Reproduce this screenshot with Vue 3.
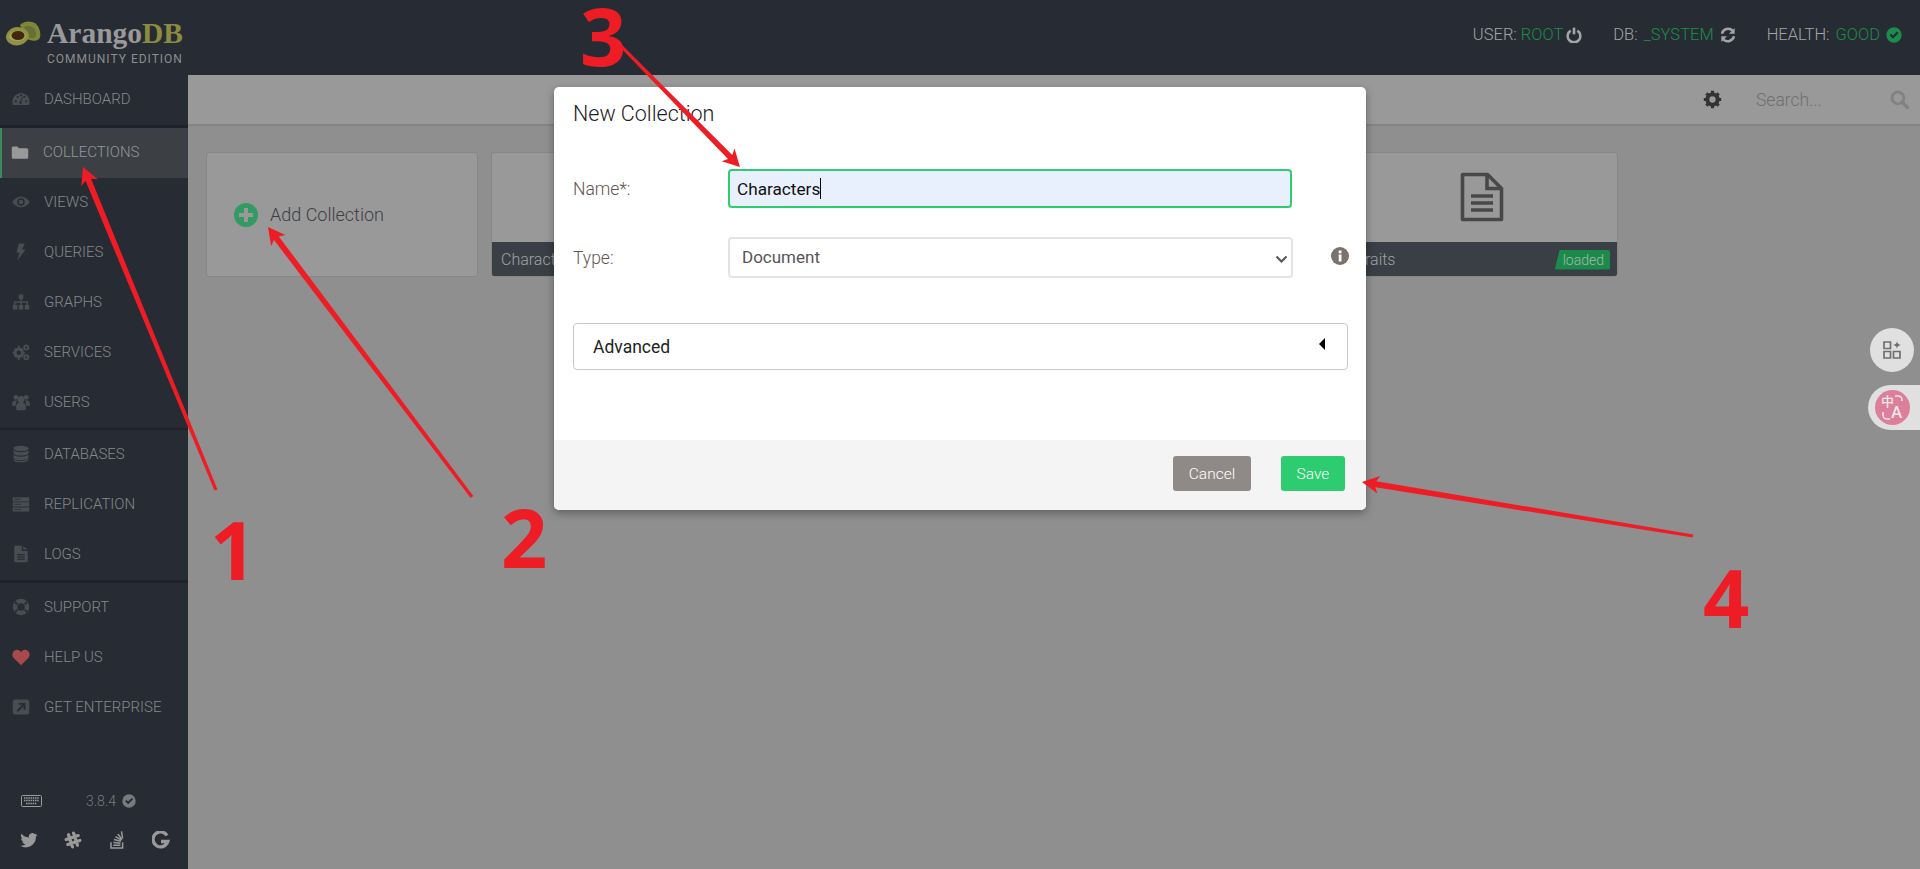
<script setup>
const icons = {
  gauge: { fill: 'M12 4a11.500 11.500 0 0 0-11.500 11.500c0 2 .5 3.500 1.300 4.500h20.400c.8-1 1.300-2.500 1.300-4.500A11.500 11.500 0 0 0 12 4zM5 16.500a1.500 1.500 0 1 1 0-3 1.500 1.500 0 0 1 0 3zM7.500 10.500a1.500 1.500 0 1 1 0-3 1.500 1.500 0 0 1 0 3zM12 8.500a1.500 1.500 0 1 1 0-3 1.500 1.500 0 0 1 0 3zM19 16.500a1.500 1.500 0 1 1 0-3 1.500 1.500 0 0 1 0 3zM16.500 10.500a1.500 1.500 0 1 1 0-3 1.500 1.500 0 0 1 0 3zM12 18.500a2 2 0 0 1-.7-3.900l2.200-5.500 1 .4-2.200 5.500a2 2 0 0 1-.3 3.500z' },
  folder: { fill: 'M1 6.500A2 2 0 0 1 3 4.500h5.500l2 2.500H21a2 2 0 0 1 2 2v10a2 2 0 0 1-2 2H3a2 2 0 0 1-2-2z' },
  eye: { fill: 'M12 5C6.500 5 2.500 8.500.5 12c2 3.500 6 7 11.500 7s9.500-3.500 11.500-7C21.500 8.500 17.500 5 12 5zM12 17a5 5 0 1 1 0-10 5 5 0 0 1 0 10zM12 9a3 3 0 1 0 0 6 3 3 0 0 0 0-6z' },
  bolt: { fill: 'M9 0.500h8l-3.500 8H18L7 24l3-11H6z' },
  sitemap: { fill: 'M9 2h6v6h-2v3h8.500v5H23v6h-6v-6h2.500v-3h-6.500v3H15v6H9v-6h2v-3H4.500v3H7v6H1v-6h1.500v-5H11V8H9z' },
  cogs: { fill: 'M9 6a7 7 0 1 1 0 14A7 7 0 0 1 9 6zm0 4a3 3 0 1 0 0 6 3 3 0 0 0 0-6zM19 2a4 4 0 1 1 0 8 4 4 0 0 1 0-8zm0 2.500a1.500 1.500 0 1 0 0 3 1.500 1.500 0 0 0 0-3zM19 15a4 4 0 1 1 0 8 4 4 0 0 1 0-8zm0 2.500a1.500 1.500 0 1 0 0 3 1.500 1.500 0 0 0 0-3z', line: 'M9 3.500v3M9 19.500v3M1 13h3M14 13h3M3.500 7.500l2 2M12.500 16.500l2 2M14.500 7.500l-2 2M5.500 16.500l-2 2', width: 2.6 },
  users: { fill: 'M5 2.500a3.200 3.200 0 1 1 0 6.400 3.200 3.200 0 0 1 0-6.400zM19 2.500a3.200 3.200 0 1 1 0 6.400 3.200 3.200 0 0 1 0-6.400zM12 4a4.500 4.500 0 1 1 0 9 4.500 4.500 0 0 1 0-9zM0 16c0-3 1-6 3.500-6h3.200C5.500 11.500 5 13.500 5 15.500v1.500H0zM24 16c0-3-1-6-3.500-6h-3.200c1.200 1.500 1.700 3.500 1.700 5.500v1.500h5zM9 13h6c2.500 0 3.500 2.500 3.500 5.500v2c0 1.500-1 2.500-2.500 2.500H8c-1.500 0-2.500-1-2.500-2.500v-2c0-3 1-5.500 3.500-5.500z' },
  database: { fill: 'M12 1c5.500 0 10 1.500 10 3.500S17.500 8 12 8 2 6.500 2 4.500 6.500 1 12 1zM2 7c2 1.800 6 2.500 10 2.500S20 8.800 22 7v3.500c0 2-4.500 3.500-10 3.500S2 12.500 2 10.500zM2 13c2 1.800 6 2.500 10 2.500s8-.7 10-2.500v3.500c0 2-4.500 3.500-10 3.500S2 18.500 2 16.500zM2 18.500c2 1.800 6 2.500 10 2.500s8-.7 10-2.500v1c0 2-4.500 3.500-10 3.500S2 21.500 2 19.500z' },
  server: { fill: 'M1 3h22v5.500H1zM1 9.700h22v5.500H1zM1 16.500h22V22H1z', line: 'M3 5.700h9M3 12.400h9M3 19.200h9', width: 1, cut: true },
  file: { fill: 'M3 1h10v7h8v13a2 2 0 0 1-2 2H5a2 2 0 0 1-2-2zM15 1.500L20.500 6H15zM7 12v1.500h10V12zM7 15v1.500h10V15zM7 18v1.500h10V18z' },
  ring: { fill: 'M12 1a11 11 0 1 1 0 22 11 11 0 0 1 0-22zm0 6a5 5 0 1 0 0 10 5 5 0 0 0 0-10zM5 4.500a9.500 9.500 0 0 0-1.800 2.300l3.300 2.600A6 6 0 0 1 8 7.700zM19 4.500l-3 3.200a6 6 0 0 1 1.500 1.700l3.300-2.600A9.500 9.500 0 0 0 19 4.500zM3.200 17.200A9.500 9.500 0 0 0 5 19.500l3-3.200a6 6 0 0 1-1.500-1.700zM20.800 17.200l-3.300-2.600a6 6 0 0 1-1.500 1.700l3 3.200a9.500 9.500 0 0 0 1.800-2.300z' },
  heart: { fill: 'M12 23L2.200 13.200C-.5 10.300.2 5.500 3.200 3.500 6 1.600 9.800 2.400 12 5.500c2.200-3.100 6-3.900 8.800-2 3 2 3.700 6.800 1 9.700z' },
  link: { fill: 'M4 2h16a3 3 0 0 1 3 3v14a3 3 0 0 1-3 3H4a3 3 0 0 1-3-3V5a3 3 0 0 1 3-3zm5 4.500v2.500h4.500L6 16.500 8 18.500l7.500-7.500V15.500H18V6.500z' }
}
const groups = [
  [{ label: 'Dashboard', icon: 'gauge' }],
  [
    { label: 'Collections', icon: 'folder', active: true },
    { label: 'Views', icon: 'eye' },
    { label: 'Queries', icon: 'bolt' },
    { label: 'Graphs', icon: 'sitemap' },
    { label: 'Services', icon: 'cogs' },
    { label: 'Users', icon: 'users' }
  ],
  [
    { label: 'Databases', icon: 'database' },
    { label: 'Replication', icon: 'server' },
    { label: 'Logs', icon: 'file' }
  ],
  [
    { label: 'Support', icon: 'ring' },
    { label: 'Help us', icon: 'heart', love: true },
    { label: 'Get enterprise', icon: 'link' }
  ]
]
const cards = [
  { id: 1, name: 'Characters' },
  { id: 2, name: '' },
  { id: 3, name: '' },
  { id: 4, name: 'Traits', loaded: true }
]
function arrow(x1, y1, x2, y2) {
  const dx = x2 - x1, dy = y2 - y1
  const len = Math.hypot(dx, dy)
  const ux = dx / len, uy = dy / len
  const nx = -uy, ny = ux
  const at = (along, off) => `${(x1 + ux * along + nx * off).toFixed(1)},${(y1 + uy * along + ny * off).toFixed(1)}`
  const head = len - 17
  return [
    at(0, 1.6), at(head + 3, 3), at(head, 9), at(len, 0), at(head, -9), at(head + 3, -3), at(0, -1.6)
  ].join(' ')
}
const arrows = [
  arrow(216, 490, 83, 167),
  arrow(472, 497, 268, 227),
  arrow(619, 44, 740, 167),
  arrow(1693, 536, 1362, 482)
]
const numbers = [
  { n: '1', cls: 'n1' }, { n: '2', cls: 'n2' }, { n: '3', cls: 'n3' }, { n: '4', cls: 'n4' }
]
</script>

<template>
  <div class="page">
    <header class="topbar">
      <div class="brand">
        <svg class="avocado" width="36" height="26" viewBox="0 0 36 26">
          <path d="M15 4C19 0 27-1 32 4c4 5 4 12 2 14-3 3-9 2-13-1z" fill="#7f8539" />
          <path d="M19 6c4-2 9-1 11 3 2 4 1 7-1 8-3 1-6-1-8-3z" fill="#667034" />
          <path d="M1 15c1-5 6-9 11-9 7 0 11 4 12 8 0 4-3 8-9 10-7 2-15-3-14-9z" fill="#8f9243" />
          <path d="M4 15c1-3 4-5 8-5 4 0 8 2 9 4 0 3-4 6-8 6-5 0-9-2-9-5z" fill="#a5a65c" />
          <ellipse cx="13" cy="14.500" rx="6.500" ry="4.600" fill="#43280f" />
        </svg>
        <div class="brand-text">
          <div class="brand-name">Arango<span>DB</span></div>
          <div class="brand-sub">COMMUNITY EDITION</div>
        </div>
      </div>
      <div class="status">
        <div class="stat">
          <span>USER:</span><b class="ok first">ROOT</b>
          <svg class="stat-ic tight" viewBox="0 0 24 24"><path d="M7 5.500a9.500 9.500 0 1 0 10 0" fill="none" stroke="currentColor" stroke-width="3.800" /><path d="M12 1v10" stroke="currentColor" stroke-width="4" /></svg>
        </div>
        <div class="stat">
          <span>DB:</span><b class="ok">_SYSTEM</b>
          <svg class="stat-ic" viewBox="0 0 24 24"><path d="M3 10a9.500 9.500 0 0 1 16-4.500M21 14a9.500 9.500 0 0 1-16 4.500" fill="none" stroke="currentColor" stroke-width="3.800" /><path d="M22 1.500v8.500h-8.500zM2 22.500V14h8.500z" fill="currentColor" /></svg>
        </div>
        <div class="stat">
          <span>HEALTH:</span><b class="ok">GOOD</b>
          <svg class="stat-ic good" viewBox="0 0 24 24"><path fill-rule="evenodd" fill="currentColor" d="M12 .5a11.500 11.500 0 1 1 0 23 11.500 11.500 0 0 1 0-23zM5.500 12.500l5 5 8.500-8.500-2.300-2.300-6.200 6.200-2.700-2.700z" /></svg>
        </div>
      </div>
    </header>

    <div class="body">
      <aside class="side">
        <nav class="groups">
          <ul v-for="(g, i) in groups" :key="i" class="group">
            <li v-for="item in g" :key="item.label" class="item" :class="{ active: item.active }">
              <svg class="nav-ic" :class="{ love: item.love }" viewBox="0 0 24 24">
                <path :d="icons[item.icon].fill" fill="currentColor" fill-rule="evenodd" />
                <path v-if="icons[item.icon].line" :d="icons[item.icon].line" fill="none"
                  :stroke="icons[item.icon].cut ? '#272b33' : 'currentColor'" :stroke-width="icons[item.icon].width" />
              </svg>
              <span>{{ item.label }}</span>
            </li>
          </ul>
        </nav>
        <div class="side-foot">
          <div class="version-row">
            <svg class="kbd" width="21" height="12" viewBox="0 0 21 12">
              <rect x=".5" y=".5" width="20" height="11" rx="1" fill="none" stroke="#9a9a9a" />
              <path d="M3 3h15M3 5.500h15M5 8.500h11" stroke="#9a9a9a" stroke-width="1.400" stroke-dasharray="1.500 .7" />
            </svg>
            <span class="version">3.8.4</span>
            <svg class="vcheck" viewBox="0 0 24 24"><path fill-rule="evenodd" fill="currentColor" d="M12 .5a11.500 11.500 0 1 1 0 23 11.500 11.500 0 0 1 0-23zM5.500 12.500l5 5 8.500-8.500-2.300-2.300-6.200 6.200-2.700-2.700z" /></svg>
          </div>
          <div class="social">
            <svg viewBox="0 0 24 24"><path fill="currentColor" d="M23.500 5c-.9.400-1.800.7-2.700.8 1-.6 1.700-1.500 2-2.600-.9.600-1.900 1-3 1.200A4.700 4.700 0 0 0 11.800 8.700 13.400 13.400 0 0 1 2 3.800a4.700 4.700 0 0 0 1.500 6.300c-.8 0-1.500-.2-2.100-.6 0 2.300 1.600 4.200 3.800 4.700-.7.200-1.400.2-2.100.1.600 1.900 2.400 3.200 4.400 3.300A9.500 9.500 0 0 1 .5 19.500 13.400 13.400 0 0 0 21.200 7.600c.9-.7 1.700-1.600 2.300-2.600z" /></svg>
            <svg viewBox="0 0 24 24"><path fill="none" stroke="currentColor" stroke-width="4.300" stroke-linecap="round" d="M8.500 3.500v17M15.500 3.500v17M3.500 8.500h17M3.500 15.500h17" transform="rotate(-18 12 12)" /></svg>
            <svg viewBox="0 0 24 24"><path fill="none" stroke="currentColor" stroke-width="2" d="M4 15v7.500h15.500V15M7 19h9.500M7.300 15.200l9.300 1M8 11.300l9.100 2.400M10 7.500l8.100 4.800M13.200 4l5.500 7.500M18 .5l1.500 9.300" /></svg>
            <svg viewBox="0 0 24 24"><path fill="none" stroke="currentColor" stroke-width="4.400" d="M20 6A10 10 0 1 0 21 14H12" /></svg>
          </div>
        </div>
      </aside>

      <main class="main">
        <div class="toolbar">
          <svg class="gear" viewBox="0 0 24 24"><circle cx="12" cy="12" r="6.500" fill="none" stroke="#333" stroke-width="5" /><path d="M12 1v22M1 12h22M4.200 4.200l15.600 15.600M19.800 4.200L4.200 19.800" stroke="#333" stroke-width="4" stroke-dasharray="4 14" /></svg>
          <span class="search">Search...</span>
          <svg class="lens" viewBox="0 0 24 24"><circle cx="10" cy="10" r="7.500" fill="none" stroke="currentColor" stroke-width="3.600" /><path d="M15.500 15.500l7 7" stroke="currentColor" stroke-width="4.400" stroke-linecap="round" /></svg>
        </div>
        <section class="tiles">
          <div class="tile add">
            <span class="plus">
              <svg viewBox="0 0 24 24"><path d="M12 5v14M5 12h14" stroke="#999" stroke-width="4" /></svg>
            </span>
            <span>Add Collection</span>
          </div>
          <div v-for="c in cards" :key="c.id" class="tile">
            <div class="tile-art">
              <svg width="44" height="50" viewBox="0 0 44 50">
                <path d="M2.500 2.500h25l14 14v31h-39z" fill="none" stroke="#484848" stroke-width="3.600" stroke-linejoin="round" />
                <path d="M27 3v13.500h14" fill="none" stroke="#484848" stroke-width="3.600" />
                <path d="M11 24h22M11 31h22M11 38h22" stroke="#484848" stroke-width="3.400" />
              </svg>
            </div>
            <div class="tile-foot">
              <span>{{ c.name }}</span>
              <span v-if="c.loaded" class="loaded">loaded</span>
            </div>
          </div>
        </section>
      </main>
    </div>

    <div class="modal">
      <div class="modal-body">
        <h3>New Collection</h3>
        <div class="row name-row">
          <label>Name*:</label>
          <div class="field name"><span>Characters</span><i class="caret"></i></div>
        </div>
        <div class="row type-row">
          <label>Type:</label>
          <div class="field type">
            <span>Document</span>
            <svg width="13" height="8" viewBox="0 0 13 8"><path d="M1.500 1.500l5 5 5-5" fill="none" stroke="#555" stroke-width="2" /></svg>
          </div>
          <svg class="info" viewBox="0 0 18 18"><circle cx="9" cy="9" r="9" fill="#7b716d" /><rect x="7.700" y="7.500" width="2.800" height="7" fill="#fff" /><rect x="7.700" y="3.500" width="2.800" height="2.800" fill="#fff" /></svg>
        </div>
        <div class="advanced">
          <span>Advanced</span>
          <svg width="6" height="12" viewBox="0 0 6 12"><path d="M6 0v12L0 6z" fill="#000" /></svg>
        </div>
      </div>
      <div class="modal-foot">
        <button class="btn cancel">Cancel</button>
        <button class="btn save">Save</button>
      </div>
    </div>

    <div class="float-tools">
      <div class="round">
        <svg width="20" height="20" viewBox="0 0 20 20">
          <path d="M2 2h6.500v6.500H2zM2 11.500h6.500V18H2zM11.500 11.500H18V18h-6.500z" fill="none" stroke="#6f6f6f" stroke-width="1.700" />
          <path d="M15 1c.3 2.600 1.400 3.700 4 4-2.600.3-3.700 1.400-4 4-.3-2.600-1.400-3.700-4-4 2.600-.3 3.700-1.400 4-4z" fill="#6f6f6f" />
        </svg>
      </div>
      <div class="pill">
        <div class="trans">
          <span class="zh">中</span><span class="en">A</span>
          <svg class="arcs" width="35" height="35" viewBox="0 0 35 35">
            <path d="M20 6h3a4 4 0 0 1 4 4v1M15 29h-3a4 4 0 0 1-4-4v-3" fill="none" stroke="#f3e6ea" stroke-width="1.600" />
          </svg>
        </div>
      </div>
    </div>

    <svg class="marks" width="1920" height="869" viewBox="0 0 1920 869">
      <polygon v-for="(a, i) in arrows" :key="i" :points="a" fill="#ee1c25" />
    </svg>
    <span v-for="m in numbers" :key="m.n" class="num" :class="m.cls">{{ m.n }}</span>
  </div>
</template>

<style scoped>
.page {
  position: relative;
  width: 1920px;
  height: 869px;
  overflow: hidden;
  display: flex;
  flex-direction: column;
  background: #8f8f8f;
  font-family: Roboto, "Liberation Sans", sans-serif;
}
.topbar {
  height: 75px;
  flex: none;
  background: #272b33;
  display: flex;
  justify-content: space-between;
}
.brand {
  display: flex;
  align-items: flex-start;
  padding: 20px 0 0 5px;
}
.avocado {
  margin-top: 1px;
}
.brand-text {
  margin-left: 6px;
  width: 137px;
}
.brand-name {
  font-family: "Liberation Serif", serif;
  font-weight: 700;
  font-size: 29.500px;
  line-height: 26px;
  color: #999;
}
.brand-name span {
  color: #8c8c3f;
}
.brand-sub {
  font-size: 12px;
  letter-spacing: 1px;
  font-weight: 400;
  color: #8d8d8d;
  margin-top: 6px;
  line-height: 14px;
  white-space: nowrap;
}
.status {
  display: flex;
  align-items: flex-start;
  padding: 25px 18px 0 0;
  gap: 31px;
}
.stat {
  display: flex;
  align-items: center;
  font-size: 16.500px;
  font-weight: 300;
  line-height: 20px;
  color: #a2a4a6;
}
.stat b {
  font-weight: 300;
  margin-left: 6px;
  color: #1c8c4c;
}
.stat b.first {
  margin-left: 4px;
}
.stat-ic {
  width: 16px;
  height: 16px;
  margin-left: 6px;
  color: #a2a4a6;
}
.stat-ic.tight {
  margin-left: 3px;
}
.stat-ic.good {
  color: #1c8c4c;
}
.body {
  flex: 1;
  display: flex;
  min-height: 0;
}
.side {
  width: 188px;
  flex: none;
  background: #272b33;
  display: flex;
  flex-direction: column;
}
.groups {
  flex: 1;
}
.group {
  list-style: none;
  margin: 0;
  padding: 0;
  border-bottom: 2px solid #1f2329;
}
.group:first-child {
  border-bottom-width: 3px;
}
.group:last-child {
  border-bottom: 0;
}
.group:nth-child(3) {
  border-bottom-width: 3px;
}
.item {
  height: 50px;
  display: flex;
  align-items: center;
  padding-left: 12px;
  font-size: 15px;
  font-weight: 300;
  color: #85888a;
  text-transform: uppercase;
  white-space: nowrap;
  padding-bottom: 2px;
  box-sizing: border-box;
}
.item.active {
  background: #3c4044;
  border-left: 2px solid #3c8a5c;
  padding-left: 9px;
  color: #94979a;
}
.nav-ic {
  width: 18px;
  height: 18px;
  margin-right: 14px;
  flex: none;
  color: #494d52;
}
.item.active .nav-ic {
  color: #999;
}
.nav-ic.love {
  color: #a84a4d;
}
.side-foot {
  height: 82px;
  flex: none;
  box-sizing: border-box;
}
.version-row {
  height: 28px;
  display: flex;
  align-items: center;
  padding-left: 21px;
  color: #77797c;
}
.kbd {
  flex: none;
}
.version {
  margin-left: 44px;
  font-size: 14px;
  font-weight: 300;
}
.vcheck {
  width: 14px;
  height: 14px;
  margin-left: 6px;
}
.social {
  margin-top: 16px;
  display: flex;
  padding-left: 20px;
  gap: 26px;
  color: #999;
}
.social svg {
  width: 18px;
  height: 18px;
}
.main {
  flex: 1;
  min-width: 0;
  display: flex;
  flex-direction: column;
}
.toolbar {
  height: 51px;
  box-sizing: border-box;
  background: #999;
  border-bottom: 2px solid #848484;
  display: flex;
  align-items: center;
  padding: 0 11px 0 1515px;
}
.gear {
  width: 19px;
  height: 19px;
  flex: none;
}
.search {
  margin-left: 34px;
  font-size: 17.500px;
  font-weight: 300;
  color: #6f6f6f;
  flex: 1;
}
.lens {
  width: 19px;
  height: 19px;
  color: #828282;
  flex: none;
}
.tiles {
  display: flex;
  gap: 13px;
  padding: 26px 18px;
}
.tile {
  width: 272px;
  height: 125px;
  box-sizing: border-box;
  background: #999;
  border: 1px solid #868686;
  border-radius: 3px;
  display: flex;
  flex-direction: column;
  overflow: hidden;
}
.tile.add {
  flex-direction: row;
  align-items: center;
  padding-left: 27px;
  gap: 12px;
  font-size: 18px;
  font-weight: 300;
  color: #3c3f44;
}
.plus {
  width: 24px;
  height: 24px;
  border-radius: 50%;
  background: #329a62;
  display: block;
}
.plus svg {
  display: block;
  width: 24px;
  height: 24px;
}
.tile-art {
  flex: 1;
  display: flex;
  justify-content: center;
  align-items: flex-start;
  padding-top: 19px;
}
.tile-foot {
  height: 35px;
  flex: none;
  background: #3a3f45;
  margin: 0 -1px -1px;
  display: flex;
  align-items: center;
  justify-content: space-between;
  padding: 0 8px 0 10px;
  font-size: 16px;
  font-weight: 300;
  color: #a0a2a4;
}
.loaded {
  background: #1b8a4a;
  color: #a8b8ac;
  font-size: 14px;
  line-height: 20px;
  padding: 0 6px 0 8px;
  border-radius: 2px;
  clip-path: polygon(5px 0, 100% 0, 100% 100%, 0 100%);
}
.modal {
  position: absolute;
  left: 554px;
  top: 87px;
  width: 812px;
  height: 423px;
  background: #fff;
  border-radius: 5px;
  box-shadow: 0 3px 9px rgba(0, 0, 0, 0.35);
  display: flex;
  flex-direction: column;
  overflow: hidden;
}
.modal-body {
  flex: 1;
  padding: 0 18px 0 19px;
  display: flex;
  flex-direction: column;
}
.modal-body h3 {
  margin: 14px 0 0;
  font-size: 21.500px;
  line-height: 26px;
  font-weight: 300;
  color: #222;
}
.row {
  display: flex;
  align-items: center;
}
.row label {
  width: 155px;
  flex: none;
  font-size: 17.500px;
  font-weight: 300;
  color: #5f5654;
}
.name-row {
  margin-top: 42px;
}
.type-row {
  margin-top: 29px;
}
.field {
  width: 565px;
  flex: none;
  box-sizing: border-box;
  border-radius: 4px;
  display: flex;
  align-items: center;
  font-size: 17px;
}
.field.name {
  height: 39px;
  border: 2px solid #2ecc71;
  background: #e8f0fe;
  padding-left: 7px;
  color: #111;
  width: 564px;
  font-size: 17.200px;
}
.caret {
  display: block;
  width: 1px;
  height: 21px;
  background: #000;
}
.field.type {
  height: 41px;
  border: 2px solid #e4e4e4;
  padding: 0 3px 2px 12px;
  color: #555;
  justify-content: space-between;
  font-weight: 400;
}
.field.type svg {
  margin-top: 4px;
}
.info {
  width: 18px;
  height: 18px;
  flex: none;
  margin-left: 38px;
  margin-top: -3px;
}
.advanced {
  margin-top: 45px;
  height: 47px;
  box-sizing: border-box;
  border: 1px solid #c8c8c8;
  border-radius: 4px;
  display: flex;
  align-items: center;
  justify-content: space-between;
  padding: 0 22px 0 19px;
  font-size: 17.500px;
  color: #222;
}
.advanced svg {
  margin-top: -6px;
}
.modal-foot {
  height: 70px;
  flex: none;
  background: #f4f4f4;
  display: flex;
  justify-content: flex-end;
  align-items: flex-start;
  padding: 16px 21px 0 0;
  gap: 30px;
  box-sizing: border-box;
}
.btn {
  height: 35px;
  border: 0;
  border-radius: 3px;
  color: #fff;
  font-family: inherit;
  font-size: 15.500px;
  font-weight: 300;
  padding: 0;
}
.cancel {
  width: 78px;
  background: #8f8a88;
}
.save {
  width: 64px;
  background: #2ecc71;
}
.float-tools {
  position: absolute;
  right: 0;
  top: 328px;
  width: 52px;
  display: flex;
  flex-direction: column;
  align-items: flex-end;
}
.round {
  width: 44px;
  height: 44px;
  margin-right: 6px;
  border-radius: 50%;
  background: #e0e0e0;
  display: flex;
  align-items: center;
  justify-content: center;
}
.pill {
  margin-top: 13px;
  width: 52px;
  height: 45px;
  border-radius: 23px 0 0 23px;
  background: #e0e0e0;
  display: flex;
  align-items: center;
  padding-left: 7px;
  box-sizing: border-box;
}
.trans {
  position: relative;
  width: 35px;
  height: 35px;
  border-radius: 50%;
  background: #dc7f9b;
  color: #f3e6ea;
  font-weight: 500;
}
.arcs {
  position: absolute;
  left: 0;
  top: 0;
}
.zh {
  position: absolute;
  left: 6px;
  top: 3px;
  font-family: "Noto Sans CJK SC", sans-serif;
  font-size: 13px;
  line-height: 15px;
}
.en {
  position: absolute;
  left: 16px;
  top: 13px;
  font-size: 17px;
  line-height: 19px;
}
.marks {
  position: absolute;
  left: 0;
  top: 0;
  pointer-events: none;
}
.num {
  position: absolute;
  font-family: "Open Sans", sans-serif;
  font-weight: 700;
  font-size: 81px;
  line-height: 60px;
  color: #ee1c25;
}
.n1 { left: 210px; top: 518.500px; }
.n2 { left: 501px; top: 506.500px; }
.n3 { left: 580px; top: 4.500px; }
.n4 { left: 1703px; top: 566.500px; }
</style>

<style>
html, body {
  margin: 0;
  padding: 0;
  overflow: hidden;
  background: #8f8f8f;
}
</style>
